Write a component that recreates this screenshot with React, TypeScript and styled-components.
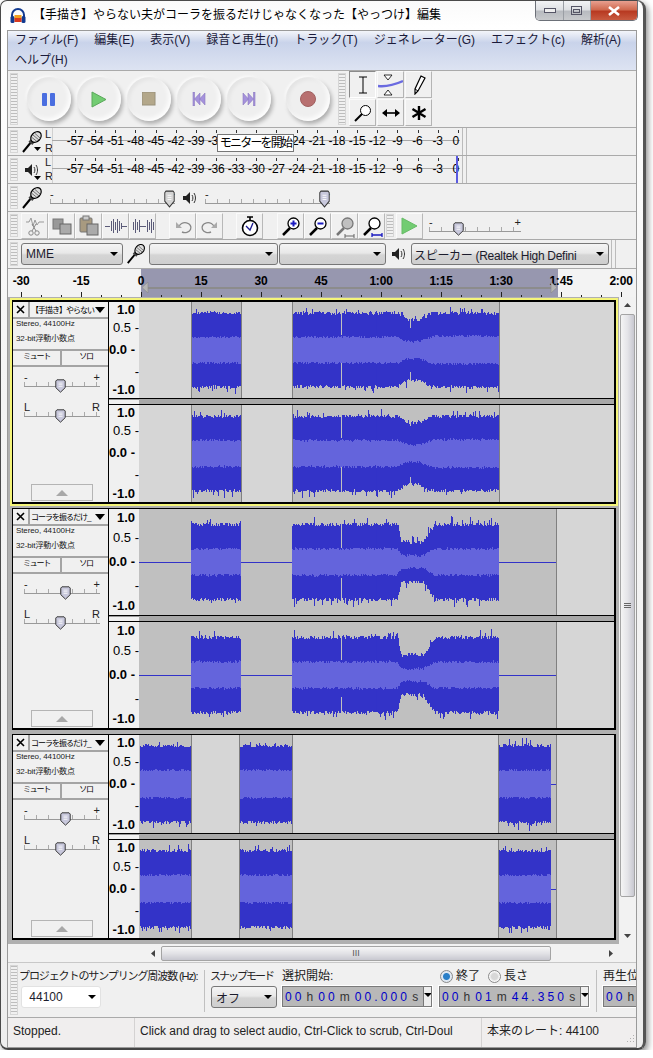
import React, { FC } from 'react';
import styled, { createGlobalStyle } from 'styled-components';

const GlobalStyle = createGlobalStyle`
  html, body {
    margin: 0;
    background: #fff;
  }
  body {
    font-family: "Liberation Sans", "Noto Sans CJK JP", sans-serif;
    font-size: 12px;
    color: #000;
  }
`;

const Win = styled.div`
  box-sizing: border-box;
  width: 646px;
  height: 1050px;
  border: 1px solid #4a4a4a;
  border-right: 3px solid #555;
  border-bottom: 2px solid #444;
  border-radius: 7px 9px 8px 8px;
  background: linear-gradient(180deg, #fafafa 0, #fff 26px, #f4f4f4 400px, #eee 100%);
  box-shadow: 2px 3px 6px rgba(0, 0, 0, 0.45);
  display: flex;
  flex-direction: column;
  padding: 0 6px 0 6px;
`;

const TitleBar = styled.div`
  height: 29px;
  flex: none;
  display: flex;
  align-items: flex-start;
  margin-right: -1px;
`;

const TitleText = styled.div`
  font-size: 12px;
  line-height: 14px;
  margin: 7px 0 0 6px;
  white-space: nowrap;
  flex: 1;
`;

const WinBtns = styled.div`
  display: flex;
  height: 19px;
  border: 1px solid #6c7078;
  border-top: none;
  border-radius: 0 0 5px 5px;
  overflow: hidden;
`;

const WinBtn = styled.div<{ $w: number; $red?: boolean }>`
  width: ${(p) => p.$w}px;
  display: flex;
  align-items: center;
  justify-content: center;
  border-left: 1px solid #9a9ea4;
  background: ${(p) =>
    p.$red
      ? 'linear-gradient(180deg, #e8a090 0, #d06a50 45%, #b83a22 55%, #c85a40 100%)'
      : 'linear-gradient(180deg, #f2f3f5 0, #dfe1e4 45%, #b8bbc0 55%, #c8cacd 100%)'};
  &:first-child {
    border-left: none;
  }
`;

const Client = styled.div`
  flex: 1;
  border: 1px solid #9a9a9a;
  background: #f0f0f0;
  display: flex;
  flex-direction: column;
  overflow: hidden;
  min-height: 0;
`;

const MenuBar = styled.div`
  height: 40px;
  box-sizing: border-box;
  flex: none;
  background: linear-gradient(180deg, #f3f5fa 0, #c9d3ea 30%, #dde3f2 100%);
  padding: 0 0 0 7px;
  display: flex;
  flex-wrap: wrap;
  column-gap: 16px;
  row-gap: 1px;
  align-content: flex-start;
  border-bottom: 1px solid #aaa;
`;

const MenuItem = styled.div`
  height: 19px;
  line-height: 19px;
  color: #1a1a3a;
  white-space: nowrap;
`;

const Row = styled.div<{ $h: number }>`
  height: ${(p) => p.$h}px;
  flex: none;
  box-sizing: border-box;
  border-bottom: 1px solid #aaa;
  display: flex;
  align-items: stretch;
  position: relative;
`;

const Grip = styled.div<{ $ml?: number }>`
  flex: none;
  width: 6px;
  margin: 2px 1px 2px ${(p) => p.$ml ?? 2}px;
  border: 1px solid #d6d6d6;
  background: repeating-linear-gradient(180deg, #bdbdbd 0 1px, #f0f0f0 1px 3px);
`;

/* transport */
const Transport = styled.div`
  display: flex;
  align-items: center;
  gap: 6px;
  padding-left: 8px;
  width: 311px;
  box-sizing: content-box;
  flex: none;
`;

const RoundBtn = styled.div<{ $ml?: number }>`
  width: 44px;
  height: 44px;
  flex: none;
  margin-left: ${(p) => p.$ml ?? 0}px;
  border-radius: 50%;
  display: flex;
  align-items: center;
  justify-content: center;
  background: #efefef;
  box-shadow: 2px 3px 4px rgba(0, 0, 0, 0.28), -1px -1px 3px rgba(255, 255, 255, 0.9), inset -2px -2px 5px #fff, inset 2px 2px 4px rgba(0, 0, 0, 0.06);
`;

const ToolGrid = styled.div`
  display: grid;
  grid-template-columns: repeat(3, 27px);
  grid-template-rows: repeat(2, 27px);
  gap: 1px;
  margin: 0 0 0 2px;
`;

const ToolBtn = styled.div<{ $down?: boolean }>`
  box-sizing: border-box;
  display: flex;
  align-items: center;
  justify-content: center;
  border: 1px solid;
  border-color: ${(p) => (p.$down ? '#8a8a8a #fff #fff #8a8a8a' : '#fafafa #b4b4b4 #b4b4b4 #fafafa')};
`;

/* meters */
const IconSlot = styled.div<{ $w: number }>`
  width: ${(p) => p.$w}px;
  flex: none;
  display: flex;
  align-items: center;
  justify-content: center;
`;

const LR = styled.div`
  width: 9px;
  flex: none;
  display: flex;
  flex-direction: column;
  justify-content: space-between;
  font-size: 11px;
  line-height: 13px;
  padding: 0;
  color: #222;
`;

const MeterBody = styled.div`
  width: 408px;
  flex: none;
  margin-left: -2px;
  position: relative;
  display: flex;
  align-items: center;
  padding: 0 0 2px 13px;
  box-sizing: border-box;
  background:
    linear-gradient(#a8a8a8, #a8a8a8) left 12px / 100% 1px no-repeat,
    repeating-linear-gradient(90deg, #333 0 1px, transparent 1px 20.15px) 23px 2px / 100% 3px no-repeat,
    linear-gradient(#d0d0d0, #d0d0d0) left top / 1px 100% no-repeat;
`;

const MeterLabel = styled.div<{ $last?: boolean }>`
  width: ${(p) => (p.$last ? 16 : 20.15)}px;
  flex: none;
  text-align: center;
  font-size: 12px;
  line-height: 14px;
  letter-spacing: -0.2px;
`;

const PeakBar = styled.div`
  position: absolute;
  left: 404px;
  top: 0;
  bottom: 0;
  width: 2px;
  background: #5a5ae0;
`;

const MeterEnd = styled.div`
  width: 3px;
  margin-left: 2px;
  flex: none;
  border-left: 1px solid #bbb;
  border-right: 1px solid #bbb;
`;

const Tip = styled.div`
  position: absolute;
  left: 165px;
  top: 6px;
  width: 77px;
  height: 18px;
  box-sizing: border-box;
  border: 1px solid #777;
  background: #fff;
  text-align: center;
  font-size: 12px;
  line-height: 16px;
  letter-spacing: -1.8px;
  white-space: nowrap;
`;

/* sliders */
const SliderRoot = styled.div<{ $w: number; $ml?: number }>`
  position: relative;
  width: ${(p) => p.$w}px;
  height: 18px;
  flex: none;
  margin-left: ${(p) => p.$ml ?? 0}px;
`;

const SliderMarks = styled.div`
  display: flex;
  justify-content: space-between;
  font-size: 11px;
  line-height: 10px;
  height: 10px;
  color: #222;
`;

const SliderLine = styled.div`
  height: 4px;
  border-bottom: 1px solid #999;
  background: repeating-linear-gradient(90deg, #aaa 0 1px, transparent 1px 12px) 0 0 / 100% 4px no-repeat;
`;

const ThumbWrap = styled.div<{ $x: number; $top: number; $h: number }>`
  position: absolute;
  left: ${(p) => p.$x - 5.5}px;
  top: ${(p) => p.$top}px;
  width: 11px;
  height: ${(p) => p.$h}px;
`;

const SliderSlot = styled.div`
  display: flex;
  align-items: center;
`;

/* edit toolbar */
const EditBtn = styled.div<{ $ml?: number }>`
  box-sizing: border-box;
  width: 27px;
  height: 26px;
  align-self: center;
  flex: none;
  margin-left: ${(p) => p.$ml ?? 0}px;
  display: flex;
  align-items: center;
  justify-content: center;
  border: 1px solid;
  border-color: #fafafa #b8b8b8 #b8b8b8 #fafafa;
`;

/* device toolbar */
const Select = styled.div<{ $w: number; $ml?: number; $plain?: boolean; $tight?: boolean }>`
  box-sizing: border-box;
  width: ${(p) => p.$w}px;
  height: 22px;
  flex: none;
  align-self: center;
  margin-left: ${(p) => p.$ml ?? 0}px;
  border: 1px solid ${(p) => (p.$plain ? '#e2e2e2' : '#777')};
  border-radius: 3px;
  background: ${(p) => (p.$plain ? '#fff' : 'linear-gradient(180deg, #f4f4f4 0, #e8e8e8 45%, #d4d4d4 55%, #cfcfcf 100%)')};
  display: flex;
  align-items: center;
  justify-content: space-between;
  padding: 0 4px 0 ${(p) => (p.$tight ? 2 : 4)}px;
  font-size: 12px;
  letter-spacing: ${(p) => (p.$tight ? '-0.3px' : '0')};
  white-space: nowrap;
  overflow: hidden;
  color: #1c1c2c;
`;

const Arrow = styled.span`
  width: 0;
  height: 0;
  flex: none;
  border-left: 4px solid transparent;
  border-right: 4px solid transparent;
  border-top: 4px solid #000;
  margin-left: 4px;
`;

/* time ruler */
const TimeRuler = styled.div`
  height: 28px;
  flex: none;
  box-sizing: border-box;
  position: relative;
  display: flex;
  padding-top: 5px;
  overflow: hidden;
  background:
    repeating-linear-gradient(90deg, #222 0 1px, transparent 1px 60px) 13px bottom / 100% 5px no-repeat,
    repeating-linear-gradient(90deg, #222 0 1px, transparent 1px 20px) 13px bottom / 100% 2px no-repeat,
    linear-gradient(90deg, #f3f3f3 133px, #9797af 133px, #9797af 550px, #f3f3f3 550px);
`;

const TimeLabel = styled.div<{ $first?: boolean }>`
  flex: none;
  width: 60px;
  margin-left: ${(p) => (p.$first ? -17 : 0)}px;
  text-align: center;
  font-size: 12px;
  font-weight: 700;
  line-height: 14px;
  letter-spacing: -0.2px;
`;

const RulerOverlay = styled.svg`
  position: absolute;
  left: 0;
  top: 0;
`;

/* tracks */
const Project = styled.div`
  height: 647px;
  flex: none;
  display: flex;
  background: #b0b0b0;
`;

const TrackList = styled.div`
  flex: 1;
  padding: 1px 1px 0 2px;
  min-width: 0;
`;

const TrackBox = styled.div<{ $selected?: boolean }>`
  display: flex;
  border: 2px solid ${(p) => (p.$selected ? '#f4f47a' : 'transparent')};
  background: #000;
  background-clip: padding-box;
  padding: ${(p) => (p.$selected ? '2px' : '1px')} 2px 2px 1px;
`;

const Panel = styled.div`
  width: 95px;
  flex: none;
  background: #f0f0f0;
  display: flex;
  flex-direction: column;
  margin-right: 1px;
`;

const PanelHead = styled.div`
  display: flex;
  box-sizing: border-box;
  height: 17px;
  flex: none;
  border-bottom: 2px solid #a4a4a4;
`;

const CloseBox = styled.div`
  width: 15px;
  flex: none;
  border-right: 2px solid #a4a4a4;
  display: flex;
  align-items: center;
  justify-content: center;
`;

const NameBox = styled.div`
  flex: 1;
  min-width: 0;
  display: flex;
  align-items: center;
  justify-content: space-between;
  font-size: 8px;
  letter-spacing: -1px;
  padding: 0 3px 0 1px;
  white-space: nowrap;
  overflow: hidden;
`;

const NameArrow = styled.span`
  width: 0;
  height: 0;
  flex: none;
  border-left: 5.5px solid transparent;
  border-right: 5.5px solid transparent;
  border-top: 6px solid #000;
`;

const Info = styled.div`
  font-size: 8px;
  line-height: 9px;
  height: 9px;
  margin-bottom: 6px;
  padding-left: 3px;
  white-space: nowrap;
  color: #222;
  letter-spacing: -0.1px;
  flex: none;
  &:first-of-type {
    margin-top: 1px;
  }
`;

const MuteRow = styled.div`
  display: flex;
  box-sizing: border-box;
  height: 18px;
  flex: none;
  border-top: 2px solid #a4a4a4;
  border-bottom: 2px solid #a4a4a4;
`;

const MuteBtn = styled.div<{ $w: number }>`
  width: ${(p) => p.$w}px;
  flex: none;
  text-align: center;
  font-size: 8px;
  letter-spacing: -1.2px;
  line-height: 11px;
  border-right: 2px solid #a4a4a4;
  &:last-child {
    border-right: none;
  }
`;

const PanelSliders = styled.div`
  padding: 5px 0 0 11px;
  display: flex;
  flex-direction: column;
  gap: 12px;
`;

const Collapse = styled.div`
  width: 62px;
  height: 17px;
  box-sizing: border-box;
  margin: auto 0 1px 18px;
  border: 1px solid #b4b4b4;
  display: flex;
  align-items: center;
  justify-content: center;
`;

const CollapseArrow = styled.span`
  width: 0;
  height: 0;
  border-left: 6px solid transparent;
  border-right: 6px solid transparent;
  border-bottom: 6px solid #a8a8a8;
`;

const Channels = styled.div`
  flex: 1;
  min-width: 0;
  display: flex;
  flex-direction: column;
`;

const Channel = styled.div<{ $h: number }>`
  height: ${(p) => p.$h}px;
  flex: none;
  display: flex;
`;

const ChannelSep = styled.div`
  height: 7px;
  flex: none;
  display: flex;
  background: #000;
`;

const SepRuler = styled.div`
  width: 30px;
  background: #f0f0f0;
  border-top: 1px solid #999;
  box-sizing: border-box;
  margin-top: 1px;
  margin-bottom: 1px;
`;

const SepGap = styled.div`
  flex: 1;
  background: #a8a8a8;
  margin: 1px 0;
`;

const VRuler = styled.div`
  width: 30px;
  flex: none;
  background: #f0f0f0;
  display: grid;
  grid-template-rows: 15.5fr 20fr 23.5fr 20.5fr 16.5fr;
  align-items: center;
  justify-items: end;
`;

const VLabel = styled.div<{ $bold?: boolean }>`
  font-size: 13px;
  line-height: 13px;
  font-weight: ${(p) => (p.$bold ? 700 : 400)};
  padding-right: ${(p) => (p.$bold ? 4 : 0)}px;
  white-space: nowrap;
`;

const VScroll = styled.div`
  width: 17px;
  flex: none;
  background: #f2f2f2;
  display: flex;
  flex-direction: column;
  align-items: center;
`;

const ArrowBtn = styled.div`
  flex: none;
  height: 17px;
  width: 17px;
  display: flex;
  align-items: center;
  justify-content: center;
`;

const VThumb = styled.div`
  box-sizing: border-box;
  width: 15px;
  height: 583px;
  border: 1px solid #a4a4a4;
  border-radius: 2px;
  background: linear-gradient(90deg, #f4f4f4 0, #e4e4e8 50%, #c8c8d0 100%);
  display: flex;
  align-items: center;
  justify-content: center;
`;

const HScroll = styled.div`
  height: 18px;
  flex: none;
  display: flex;
  align-items: center;
  background: #f2f2f2;
  padding-left: 137px;
`;

const HThumb = styled.div`
  box-sizing: border-box;
  width: 390px;
  height: 15px;
  margin-left: -1px;
  border: 1px solid #a4a4a4;
  border-radius: 2px;
  background: linear-gradient(180deg, #f6f6f6 0, #e2e2e6 50%, #c8c8d0 100%);
  display: flex;
  align-items: center;
  justify-content: center;
  font-size: 9px;
  color: #555;
`;

/* selection bar */
const SelBar = styled.div`
  height: 56px;
  flex: none;
  box-sizing: border-box;
  display: flex;
  border-top: 1px solid #c8c8c8;
  border-bottom: 1px solid #aaa;
`;

const SelCol = styled.div<{ $w: number; $ml?: number }>`
  width: ${(p) => p.$w}px;
  flex: none;
  margin-left: ${(p) => p.$ml ?? 0}px;
  display: flex;
  flex-direction: column;
  padding-top: 5px;
  white-space: nowrap;
`;

const SelLabel = styled.div<{ $squeeze?: number }>`
  height: 16px;
  line-height: 16px;
  margin-bottom: 2px;
  display: flex;
  align-items: center;
  gap: 3px;
  color: #222;
  font-size: ${(p) => (p.$squeeze ? 11 : 12)}px;
  letter-spacing: ${(p) => -(p.$squeeze ?? 0)}px;
`;

const VSep = styled.div<{ $ml: number }>`
  width: 1px;
  margin: 7px 0 5px ${(p) => p.$ml}px;
  flex: none;
  background: #c0c0c0;
`;

const Radio = styled.span<{ $on?: boolean; $ml?: number }>`
  width: 11px;
  height: 11px;
  border-radius: 50%;
  border: 1px solid #8a8a8a;
  background: ${(p) =>
    p.$on ? 'radial-gradient(circle, #2a7fc8 0 3px, #dfe8f2 4px)' : 'radial-gradient(circle, #d8d8d8 0 3px, #fafafa 5px)'};
  flex: none;
  margin-left: ${(p) => p.$ml ?? 0}px;
`;

const Numeric = styled.div<{ $w: number }>`
  box-sizing: border-box;
  flex: none;
  width: ${(p) => p.$w}px;
  height: 21px;
  border: 1px solid #7a7a7a;
  background: #b8b8b8;
  box-shadow: 0 0 0 1px #fff;
  display: flex;
  align-items: center;
  padding-left: 2px;
  font-size: 12px;
  overflow: hidden;
`;

const Digits = styled.span`
  color: #0000c8;
  letter-spacing: 3.1px;
`;

const Unit = styled.span`
  color: #333;
  margin: 0 5px 0 2px;
`;

const NumDrop = styled.span`
  width: 9px;
  margin-left: auto;
  height: 100%;
  flex: none;
  box-sizing: border-box;
  background: #eee;
  border-left: 1px solid #777;
  display: flex;
  justify-content: center;
  padding-top: 6px;
`;

const NumDropArrow = styled.span`
  width: 0;
  height: 0;
  border-left: 4px solid transparent;
  border-right: 4px solid transparent;
  border-top: 4px solid #000;
`;

/* status bar */
const StatusBar = styled.div`
  flex: 1;
  display: flex;
  background: #f0eeee;
  position: relative;
  min-height: 0;
`;

const StatusPane = styled.div<{ $w: number }>`
  width: ${(p) => p.$w}px;
  flex: none;
  box-sizing: border-box;
  border-right: 1px solid #d4d2d2;
  padding: 5px 0 0 5px;
  line-height: 16px;
  white-space: nowrap;
  overflow: hidden;
  color: #222;
  &:last-of-type {
    border-right: none;
  }
`;

const Resize = styled.svg`
  position: absolute;
  right: 1px;
  bottom: 2px;
`;

/* drawings */
const Mic: FC<{ drop?: boolean; s?: number }> = ({ drop, s = 24 }) => (
  <svg width={s} height={s} viewBox="0 0 24 24">
    <line x1="3" y1="22" x2="12" y2="11" stroke="#000" strokeWidth="2" />
    <rect x="9.5" y="9" width="5" height="5" fill="#444" transform="rotate(40 12 11.5)" />
    <ellipse cx="16" cy="7" rx="4.5" ry="6" fill="#ddd" stroke="#000" strokeWidth="1.2" transform="rotate(42 16 7)" />
    <path d="M13 5l6 5M15 3.5l5 4.5M12 7.5l5 4" stroke="#555" strokeWidth="0.8" />
    {drop && <path d="M14 17h7l-3.5 4z" fill="#000" />}
  </svg>
);

const Speaker: FC<{ drop?: boolean }> = ({ drop }) => (
  <svg width="24" height="24" viewBox="0 0 24 24">
    <path d="M5 10h3l4-4v12l-4-4H5z" fill="#222" />
    <path d="M14 9c1.2 1.8 1.2 4.2 0 6M16 7c2 3 2 7 0 10" stroke="#333" strokeWidth="1" fill="none" />
    {drop && <path d="M14 18h7l-3.5 4z" fill="#000" />}
  </svg>
);

const Thumb: FC<{ fill?: string }> = ({ fill = '#c8c8dc' }) => (
  <svg width="100%" height="100%" viewBox="0 0 14 17" preserveAspectRatio="none" style={{ display: 'block' }}>
    <path d="M2.5 1h9l1.5 1.5v8L7 16 1 10.5v-8z" fill={fill} stroke="#333" strokeWidth="1.2" />
    <path d="M4.5 5h5M4.5 7h5M4.5 9h5" stroke="#fff" strokeWidth="0.9" />
  </svg>
);

const Slider: FC<{
  w: number;
  x: number;
  left: string;
  right: string;
  ml?: number;
  fill?: string;
  top?: number;
  h?: number;
}> = ({ w, x, left, right, ml, fill, top = 7, h = 14 }) => (
  <SliderRoot $w={w} $ml={ml}>
    <SliderMarks>
      <span>{left}</span>
      <span>{right}</span>
    </SliderMarks>
    <SliderLine />
    <ThumbWrap $x={x} $top={top} $h={h}>
      <Thumb fill={fill} />
    </ThumbWrap>
  </SliderRoot>
);

const Tri: FC<{ d: string }> = ({ d }) => (
  <svg width="9" height="9" viewBox="0 0 9 9">
    <path d={d} fill="#444" />
  </svg>
);

const Ico: FC<{ children: React.ReactNode }> = ({ children }) => (
  <svg width="24" height="24" viewBox="0 0 24 24" fill="none">
    {children}
  </svg>
);

const ZoomGlass: FC<{ inner?: React.ReactNode; gray?: boolean }> = ({ inner, gray }) => (
  <Ico>
    <line x1="4" y1="21" x2="11" y2="14" stroke={gray ? '#777' : '#000'} strokeWidth="2.5" />
    <circle cx="14.5" cy="9.5" r="5.5" fill={gray ? '#c0c0c0' : '#fff'} stroke={gray ? '#777' : '#000'} strokeWidth="1.3" />
    {inner}
  </Ico>
);

const hash = (seed: number) => {
  let s = seed;
  return () => {
    s = (s + 0x6d2b79f5) | 0;
    let t = Math.imul(s ^ (s >>> 15), 1 | s);
    t = (t + Math.imul(t ^ (t >>> 7), 61 | t)) ^ t;
    return ((t ^ (t >>> 14)) >>> 0) / 4294967296;
  };
};

type Span = [number, number];
type Shape = (x: number) => [number, number];

const X0 = 139;
const W = 476;

const Wave: FC<{
  h: number;
  seed: number;
  dark: Span[];
  lines: number[];
  clips: Span[];
  flat?: Span[];
  shape: Shape;
}> = ({ h, seed, dark, lines, clips, flat = [], shape }) => {
  const rnd = hash(seed);
  const cy = h / 2;
  let outer = '';
  let inner = '';
  clips.forEach(([a, b]) => {
    for (let x = a; x < b; x++) {
      const [p, r] = shape(x);
      const spike = () => (rnd() < 0.12 ? rnd() * 0.14 : 0);
      const up = (p + (rnd() - 0.5) * 0.07 + spike()) * cy;
      const dn = (p + (rnd() - 0.5) * 0.07 + spike()) * cy;
      const ru = (r + (rnd() - 0.5) * 0.05) * cy;
      const rd = (r + (rnd() - 0.5) * 0.05) * cy;
      const px = x - X0 + 0.5;
      outer += `M${px} ${Math.round(cy - up)}V${Math.round(cy + dn)}`;
      inner += `M${px} ${Math.round(cy - ru)}V${Math.round(cy + rd)}`;
    }
  });
  return (
    <svg width={W} height={h} viewBox={`0 0 ${W} ${h}`} shapeRendering="crispEdges" style={{ display: 'block', background: '#d6d6d6' }}>
      {dark.map(([a, b]) => (
        <rect key={a} x={a - X0} y={0} width={b - a} height={h} fill="#c0c0c0" />
      ))}
      {flat.map(([a, b]) => (
        <rect key={a} x={a - X0} y={Math.floor(cy)} width={b - a} height={1} fill="#3232c8" />
      ))}
      <path d={outer} stroke="#3232c8" strokeWidth="1" />
      <path d={inner} stroke="#6464dc" strokeWidth="1" />
      {lines.map((x) => (
        <rect key={x} x={x - X0} y={0} width={1} height={h} fill="#808080" />
      ))}
    </svg>
  );
};

const between = (x: number, a: number, b: number) => Math.min(1, Math.max(0, (x - a) / (b - a)));

const shape1: Shape = (x) => {
  if (x === 341) return [0.3, 0.27];
  if (x >= 398 && x < 432) {
    const t = Math.min(between(x, 398, 408), 1 - between(x, 420, 432));
    const spike = Math.abs(x - 411) < 1 ? 0.16 : 0;
    return [0.77 - t * 0.14 - spike, 0.27 - t * 0.09];
  }
  return [0.77, x > 432 ? 0.29 : 0.27];
};

const shape2: Shape = (x) => {
  if (x === 341) return [0.28, 0.25];
  if (x >= 398 && x < 436) {
    const t = Math.min(between(x, 398, 402), 1 - between(x, 424, 436));
    return [0.71 - t * 0.33, 0.25 - t * 0.13];
  }
  return [0.71, 0.25];
};

const shape3: Shape = () => [0.78, 0.28];

const VScale: FC = () => (
  <VRuler>
    <VLabel $bold>1.0</VLabel>
    <VLabel>0.5 -</VLabel>
    <VLabel $bold>0.0 -</VLabel>
    <VLabel>-</VLabel>
    <VLabel $bold>-1.0</VLabel>
  </VRuler>
);

const Track: FC<{
  name: string;
  selected?: boolean;
  heights: [number, number];
  gain: number;
  pan: number;
  seed: number;
  dark: Span[];
  lines: number[];
  clips: Span[];
  flat?: Span[];
  shape: Shape;
}> = ({ name, selected, heights, gain, pan, seed, dark, lines, clips, flat, shape }) => (
  <TrackBox $selected={selected}>
    <Panel>
      <PanelHead>
        <CloseBox>
          <svg width="9" height="9" viewBox="0 0 9 9">
            <path d="M1 1l7 7M8 1L1 8" stroke="#000" strokeWidth="1.6" />
          </svg>
        </CloseBox>
        <NameBox>
          <span>{name}</span>
          <NameArrow />
        </NameBox>
      </PanelHead>
      <Info>Stereo, 44100Hz</Info>
      <Info>32-bit浮動小数点</Info>
      <MuteRow>
        <MuteBtn $w={47}>ミュート</MuteBtn>
        <MuteBtn $w={48}>ソロ</MuteBtn>
      </MuteRow>
      <PanelSliders>
        <Slider w={76} x={gain} left="-" right="+" />
        <Slider w={76} x={pan} left="L" right="R" />
      </PanelSliders>
      <Collapse>
        <CollapseArrow />
      </Collapse>
    </Panel>
    <Channels>
      <Channel $h={heights[0]}>
        <VScale />
        <Wave h={heights[0]} seed={seed} dark={dark} lines={lines} clips={clips} flat={flat} shape={shape} />
      </Channel>
      <ChannelSep>
        <SepRuler />
        <SepGap />
      </ChannelSep>
      <Channel $h={heights[1]}>
        <VScale />
        <Wave h={heights[1]} seed={seed + 7} dark={dark} lines={lines} clips={clips} flat={flat} shape={shape} />
      </Channel>
    </Channels>
  </TrackBox>
);

const meterLabels = ['-57', '-54', '-51', '-48', '-45', '-42', '-39', '-36', '-33', '-30', '-27', '-24', '-21', '-18', '-15', '-12', '-9', '-6', '-3', '0'];
const timeLabels = ['-30', '-15', '0', '15', '30', '45', '1:00', '1:15', '1:30', '1:45', '2:00'];

const Meter: FC<{ peak?: boolean; hidden?: string[]; children?: React.ReactNode }> = ({ peak, hidden = [], children }) => (
  <MeterBody>
    {meterLabels.map((l, i) => (
      <MeterLabel key={l} $last={i === meterLabels.length - 1}>
        {hidden.includes(l) ? '' : l}
      </MeterLabel>
    ))}
    {peak && <PeakBar />}
    {children}
  </MeterBody>
);

const Time: FC<{ parts: [string, string, string] }> = ({ parts }) => (
  <>
    <Digits>{parts[0]}</Digits>
    <Unit>h</Unit>
    <Digits>{parts[1]}</Digits>
    <Unit>m</Unit>
    <Digits>{parts[2]}</Digits>
    <Unit>s</Unit>
  </>
);

const App: FC = () => (
  <>
    <GlobalStyle />
    <Win>
      <TitleBar>
        <svg width="18" height="18" viewBox="0 0 18 18" style={{ margin: '6px 0 0 2px', flex: 'none' }}>
          <path d="M3 11V8a6 6 0 0 1 12 0v3" stroke="#123a90" strokeWidth="2" fill="none" />
          <rect x="1.5" y="9" width="4" height="7" rx="1.5" fill="#123a90" />
          <rect x="12.5" y="9" width="4" height="7" rx="1.5" fill="#123a90" />
          <rect x="5.5" y="8" width="7" height="4" fill="#f2a020" />
          <rect x="5.5" y="11" width="7" height="4" fill="#d83a20" />
        </svg>
        <TitleText>【手描き】やらない夫がコーラを振るだけじゃなくなった【やっつけ】編集</TitleText>
        <WinBtns>
          <WinBtn $w={27}>
            <svg width="12" height="6"><rect x="0.5" y="0.5" width="11" height="4" fill="#eee" stroke="#556" /></svg>
          </WinBtn>
          <WinBtn $w={26}>
            <svg width="12" height="10"><rect x="0.5" y="0.5" width="10" height="8" fill="none" stroke="#556" /><rect x="2.5" y="3.5" width="6" height="3" fill="none" stroke="#556" /></svg>
          </WinBtn>
          <WinBtn $w={46} $red>
            <svg width="12" height="10"><path d="M1 1l10 8M11 1L1 9" stroke="#fff" strokeWidth="2.6" /></svg>
          </WinBtn>
        </WinBtns>
      </TitleBar>
      <Client>
        <MenuBar>
          <MenuItem>ファイル(F)</MenuItem>
          <MenuItem>編集(E)</MenuItem>
          <MenuItem>表示(V)</MenuItem>
          <MenuItem>録音と再生(r)</MenuItem>
          <MenuItem>トラック(T)</MenuItem>
          <MenuItem>ジェネレーター(G)</MenuItem>
          <MenuItem>エフェクト(c)</MenuItem>
          <MenuItem>解析(A)</MenuItem>
          <MenuItem>ヘルプ(H)</MenuItem>
        </MenuBar>

        <Row $h={57}>
          <Grip />
          <Transport>
            <RoundBtn>
              <svg width="14" height="13"><rect width="5" height="13" rx="1" fill="#4a6ee0" /><rect x="8" width="5" height="13" rx="1" fill="#4a6ee0" /></svg>
            </RoundBtn>
            <RoundBtn>
              <svg width="16" height="17"><path d="M1 1l14 7.5L1 16z" fill="#72cc72" stroke="#5aa85a" /></svg>
            </RoundBtn>
            <RoundBtn>
              <svg width="14" height="14"><rect width="13" height="13" fill="#b3a78a" stroke="#98907a" /></svg>
            </RoundBtn>
            <RoundBtn>
              <svg width="14" height="14"><path d="M1 0h1.5v14H1zM13 1v12L7.5 7zM8 1v12L2.5 7z" fill="#a592dc" stroke="#8a78c0" strokeWidth="0.6" /></svg>
            </RoundBtn>
            <RoundBtn>
              <svg width="14" height="14"><path d="M11.5 0H13v14h-1.5zM1 1v12l5.5-6zM6 1v12l5.5-6z" fill="#a592dc" stroke="#8a78c0" strokeWidth="0.6" /></svg>
            </RoundBtn>
            <RoundBtn $ml={9}>
              <svg width="16" height="16"><circle cx="8" cy="8" r="7.5" fill="#b87070" stroke="#a06060" /></svg>
            </RoundBtn>
          </Transport>
          <Grip $ml={0} />
          <ToolGrid>
            <ToolBtn $down>
              <svg width="12" height="18"><path d="M2 1h8M6 1v16M2 17h8" stroke="#000" strokeWidth="1" /></svg>
            </ToolBtn>
            <ToolBtn>
              <svg width="26" height="22"><path d="M6 1h8l-4 5zM6 21h8l-4-5z" fill="#fff" stroke="#000" strokeWidth="0.8" /><path d="M0 12c8 1 16-1 25-5" stroke="#6a6ae0" strokeWidth="2.4" fill="none" /></svg>
            </ToolBtn>
            <ToolBtn>
              <svg width="14" height="20"><path d="M9 1l4 2-7 13-3 3 0-5z" fill="#fff" stroke="#000" strokeWidth="1.2" /><path d="M3 14l3 2" stroke="#000" /></svg>
            </ToolBtn>
            <ToolBtn>
              <svg width="18" height="18"><line x1="1" y1="17" x2="8" y2="10" stroke="#000" strokeWidth="2" /><circle cx="11.5" cy="6.5" r="5" fill="#fff" stroke="#000" /></svg>
            </ToolBtn>
            <ToolBtn>
              <svg width="18" height="10"><path d="M1 5h16" stroke="#000" strokeWidth="1.6" /><path d="M0 5l5-4v8zM18 5l-5-4v8z" fill="#000" /></svg>
            </ToolBtn>
            <ToolBtn>
              <svg width="16" height="16"><path d="M8 1v14M1.5 4l13 8M14.5 4l-13 8" stroke="#000" strokeWidth="2.4" /></svg>
            </ToolBtn>
          </ToolGrid>
        </Row>

        <Row $h={28}>
          <Grip />
          <IconSlot $w={26}><Mic drop /></IconSlot>
          <LR><span>L</span><span>R</span></LR>
          <Meter hidden={['-33', '-30', '-27']}>
            <Tip>モニターを開始</Tip>
          </Meter>
          <MeterEnd />
        </Row>
        <Row $h={28}>
          <Grip />
          <IconSlot $w={26}><Speaker drop /></IconSlot>
          <LR><span>L</span><span>R</span></LR>
          <Meter peak />
          <MeterEnd />
        </Row>

        <Row $h={28}>
          <Grip />
          <IconSlot $w={26}><Mic /></IconSlot>
          <SliderSlot>
            <Slider w={125} x={119} left="-" right="+" ml={5} fill="#d4d4d4" top={1} h={18} />
          </SliderSlot>
          <IconSlot $w={30}><Speaker /></IconSlot>
          <SliderSlot>
            <Slider w={125} x={119} left="-" right="+" top={1} h={18} />
          </SliderSlot>
        </Row>

        <Row $h={28}>
          <Grip />
          <EditBtn $ml={2}>
            <Ico>
              <path d="M3 8h3l2-4 2 8 2-6 2 5 2-3h5" stroke="#999" />
              <circle cx="8" cy="19" r="2.2" stroke="#888" />
              <circle cx="14" cy="19" r="2.2" stroke="#888" />
              <path d="M9 17l4-7M13 17L9 10" stroke="#888" />
            </Ico>
          </EditBtn>
          <EditBtn>
            <Ico>
              <rect x="3" y="5" width="10" height="10" fill="#999" stroke="#777" />
              <rect x="10" y="10" width="11" height="10" fill="#aaa" stroke="#666" />
            </Ico>
          </EditBtn>
          <EditBtn>
            <Ico>
              <rect x="3" y="4" width="12" height="14" rx="1" fill="#a89a80" stroke="#777" />
              <rect x="6" y="2" width="6" height="4" fill="#ccc" stroke="#777" />
              <rect x="10" y="10" width="11" height="11" fill="#aaa" stroke="#666" />
            </Ico>
          </EditBtn>
          <EditBtn>
            <Ico>
              <path d="M1 12h5M18 12h5M7 7v10M9 5v14M11 8v8M13 5v14M15 7v10M17 9v6" stroke="#5a5a78" shapeRendering="crispEdges" />
            </Ico>
          </EditBtn>
          <EditBtn>
            <Ico>
              <path d="M9 12h6M2 8v8M4 5v14M6 8v8M8 6v12M16 6v12M18 8v8M20 5v14M22 8v8" stroke="#5a5a78" shapeRendering="crispEdges" />
            </Ico>
          </EditBtn>
          <EditBtn $ml={13}>
            <Ico>
              <path d="M8 13a6 5 0 1 1 3 5" stroke="#888" strokeWidth="1.4" />
              <path d="M5 8v6h6z" fill="#aaa" />
            </Ico>
          </EditBtn>
          <EditBtn>
            <Ico>
              <path d="M16 13a6 5 0 1 0-3 5" stroke="#888" strokeWidth="1.4" />
              <path d="M19 8v6h-6z" fill="#aaa" />
            </Ico>
          </EditBtn>
          <EditBtn $ml={13}>
            <Ico>
              <circle cx="12" cy="14" r="7.5" fill="#fff" stroke="#000" strokeWidth="1.6" />
              <path d="M9 3h6M12 3v4" stroke="#000" strokeWidth="1.6" />
              <path d="M8 12l4 4 3-7" stroke="#1a1a90" strokeWidth="1.3" />
            </Ico>
          </EditBtn>
          <EditBtn $ml={14}>
            <ZoomGlass inner={<path d="M11.5 9.5h6M14.5 6.5v6" stroke="#1a1ac0" strokeWidth="2" />} />
          </EditBtn>
          <EditBtn>
            <ZoomGlass inner={<path d="M11.5 9.5h6" stroke="#1a1ac0" strokeWidth="2" />} />
          </EditBtn>
          <EditBtn>
            <ZoomGlass gray inner={<path d="M12 22h9M12 20v4M21 20v4" stroke="#666" />} />
          </EditBtn>
          <EditBtn>
            <ZoomGlass inner={<path d="M12 21h10M12 19v4M22 19v4" stroke="#1a1ac0" strokeWidth="1.3" />} />
          </EditBtn>
          <Grip $ml={1} />
          <EditBtn $ml={1}>
            <svg width="17" height="18"><path d="M1 1l15 8L1 17z" fill="#72cc72" stroke="#66bb66" /></svg>
          </EditBtn>
          <SliderSlot>
            <Slider w={92} x={29} left="-" right="+" ml={6} top={5} />
          </SliderSlot>
        </Row>

        <Row $h={29}>
          <Grip />
          <Select $w={102} $ml={2}>
            MME
            <Arrow />
          </Select>
          <IconSlot $w={26}><Mic s={22} /></IconSlot>
          <Select $w={129}>
            <span />
            <Arrow />
          </Select>
          <Select $w={107} $ml={1}>
            <span />
            <Arrow />
          </Select>
          <IconSlot $w={25}><Speaker /></IconSlot>
          <Select $w={198} $tight>
            スピーカー (Realtek High Defini
            <Arrow />
          </Select>
          <MeterEnd />
        </Row>

        <TimeRuler>
          {timeLabels.map((l, i) => (
            <TimeLabel key={l} $first={i === 0}>
              {l}
            </TimeLabel>
          ))}
          <RulerOverlay width="629" height="28">
            <rect x="139" y="18" width="406" height="2" fill="#8c8c8c" />
            <path d="M140 13v11l-6-5.5z" fill="#b4b4b4" stroke="#888" strokeWidth="0.6" />
            <path d="M543 13v11l6-5.5z" fill="#b4b4b4" stroke="#888" strokeWidth="0.6" />
          </RulerOverlay>
        </TimeRuler>

        <Project>
          <TrackList>
            <Track
              selected
              name="【手描き】やらない"
              heights={[96, 97]}
              gain={36}
              pan={36}
              seed={11}
              dark={[[191, 241], [292, 500]]}
              lines={[191, 241, 292, 500]}
              clips={[[191, 241], [292, 500]]}
              shape={shape1}
            />
            <Track
              name="コーラを振るだけ_"
              heights={[106, 106]}
              gain={41}
              pan={36}
              seed={23}
              dark={[[139, 557]]}
              lines={[557]}
              clips={[[191, 241], [292, 500]]}
              flat={[[139, 191], [241, 292], [500, 557]]}
              shape={shape2}
            />
            <Track
              name="コーラを振るだけ_"
              heights={[98, 98]}
              gain={41}
              pan={36}
              seed={37}
              dark={[[139, 191], [239, 292], [499, 557]]}
              lines={[191, 239, 292, 499, 557]}
              clips={[[140, 191], [240, 292], [500, 552]]}
              flat={[[552, 557]]}
              shape={shape3}
            />
          </TrackList>
          <VScroll>
            <ArrowBtn><Tri d="M4.5 2L8 6H1z" /></ArrowBtn>
            <VThumb>
              <svg width="7" height="7"><path d="M0 1.5h7M0 3.5h7M0 5.5h7" stroke="#666" /></svg>
            </VThumb>
            <ArrowBtn style={{ marginTop: 'auto' }}><Tri d="M4.5 7L8 3H1z" /></ArrowBtn>
          </VScroll>
        </Project>
        <HScroll>
          <ArrowBtn><Tri d="M2 4.5L6 1v7z" /></ArrowBtn>
          <HThumb>III</HThumb>
          <ArrowBtn style={{ marginLeft: 'auto', marginRight: 17 }}><Tri d="M7 4.5L3 1v7z" /></ArrowBtn>
        </HScroll>

        <SelBar>
          <Grip />
          <SelCol $w={185}>
            <SelLabel $squeeze={1.1}>プロジェクトのサンプリング周波数 (Hz):</SelLabel>
            <Select $w={80} $ml={2} $plain style={{ alignSelf: 'flex-start' }}>
              &nbsp;44100
              <Arrow />
            </Select>
          </SelCol>
          <VSep $ml={0} />
          <SelCol $w={67} $ml={5}>
            <SelLabel $squeeze={2}>スナップモード</SelLabel>
            <Select $w={66} $ml={1} style={{ alignSelf: 'flex-start' }}>
              オフ
              <Arrow />
            </Select>
          </SelCol>
          <SelCol $w={150} $ml={5}>
            <SelLabel>選択開始:</SelLabel>
            <Numeric $w={150}>
              <Time parts={['00', '00', '00.000']} />
              <NumDrop><NumDropArrow /></NumDrop>
            </Numeric>
          </SelCol>
          <SelCol $w={150} $ml={7}>
            <SelLabel>
              <Radio $on $ml={1} />終了
              <Radio $ml={5} />長さ
            </SelLabel>
            <Numeric $w={150}>
              <Time parts={['00', '01', '44.350']} />
              <NumDrop><NumDropArrow /></NumDrop>
            </Numeric>
          </SelCol>
          <VSep $ml={7} />
          <SelCol $w={40} $ml={6}>
            <SelLabel>再生位置:</SelLabel>
            <Numeric $w={150}>
              <Time parts={['00', '00', '00.000']} />
            </Numeric>
          </SelCol>
        </SelBar>

        <StatusBar>
          <StatusPane $w={127}>Stopped.</StatusPane>
          <StatusPane $w={347}>Click and drag to select audio, Ctrl-Click to scrub, Ctrl-Doul</StatusPane>
          <StatusPane $w={150}>本来のレート: 44100</StatusPane>
          <Resize width="11" height="11">
            <path d="M9 1h1v1H9zM6 4h1v1H6zM9 4h1v1H9zM3 7h1v1H3zM6 7h1v1H6zM9 7h1v1H9z" fill="#b0b0b0" />
          </Resize>
        </StatusBar>
      </Client>
    </Win>
  </>
);

export default App;
